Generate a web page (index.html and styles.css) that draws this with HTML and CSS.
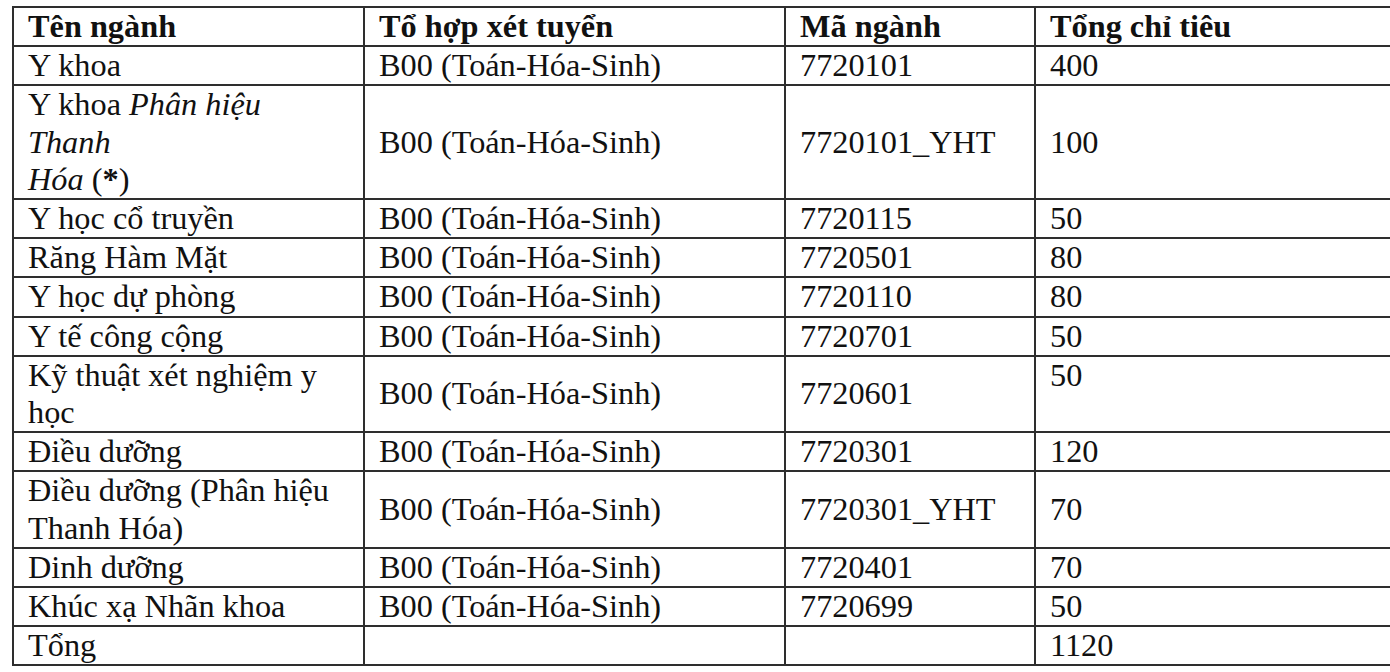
FILE: index.html
```html
<!DOCTYPE html>
<html lang="vi">
<head>
<meta charset="utf-8">
<link rel="stylesheet" href="styles.css">
</head>
<body>
<div class="page">
<table class="quota">
  <colgroup>
    <col class="c1"><col class="c2"><col class="c3"><col class="c4">
  </colgroup>
  <thead>
    <tr><th>Tên ngành</th><th>Tổ hợp xét tuyển</th><th>Mã ngành</th><th>Tổng chỉ tiêu</th></tr>
  </thead>
  <tbody>
    <tr><td>Y khoa</td><td>B00 (Toán-Hóa-Sinh)</td><td>7720101</td><td>400</td></tr>
    <tr><td>Y khoa <i>Phân hiệu</i><br><i>Thanh</i><br><i>Hóa</i> (<b>*</b>)</td><td>B00 (Toán-Hóa-Sinh)</td><td>7720101_YHT</td><td>100</td></tr>
    <tr><td>Y học cổ truyền</td><td>B00 (Toán-Hóa-Sinh)</td><td>7720115</td><td>50</td></tr>
    <tr><td>Răng Hàm Mặt</td><td>B00 (Toán-Hóa-Sinh)</td><td>7720501</td><td>80</td></tr>
    <tr><td>Y học dự phòng</td><td>B00 (Toán-Hóa-Sinh)</td><td>7720110</td><td>80</td></tr>
    <tr><td>Y tế công cộng</td><td>B00 (Toán-Hóa-Sinh)</td><td>7720701</td><td>50</td></tr>
    <tr><td>Kỹ thuật xét nghiệm y<br>học</td><td>B00 (Toán-Hóa-Sinh)</td><td>7720601</td><td class="top">50</td></tr>
    <tr><td>Điều dưỡng</td><td>B00 (Toán-Hóa-Sinh)</td><td>7720301</td><td>120</td></tr>
    <tr><td>Điều dưỡng (Phân hiệu<br>Thanh Hóa)</td><td>B00 (Toán-Hóa-Sinh)</td><td>7720301_YHT</td><td>70</td></tr>
    <tr><td>Dinh dưỡng</td><td>B00 (Toán-Hóa-Sinh)</td><td>7720401</td><td>70</td></tr>
    <tr><td>Khúc xạ Nhãn khoa</td><td>B00 (Toán-Hóa-Sinh)</td><td>7720699</td><td>50</td></tr>
    <tr><td>Tổng</td><td></td><td></td><td>1120</td></tr>
  </tbody>
</table>
</div>
</body>
</html>
```
FILE: styles.css
```css
html, body {
  margin: 0;
  padding: 0;
  background: #fff;
}
.page {
  width: 1390px;
  height: 672px;
  box-sizing: border-box;
  padding: 6px 0 0 12px;
  overflow: hidden;
}
.quota {
  border-collapse: collapse;
  table-layout: fixed;
  width: 1382px;
  font-family: "Liberation Serif", "Times New Roman", serif;
  font-size: 32.3px;
  line-height: 37.2px;
  color: #111;
}
.quota col.c1 { width: 351px; }
.quota col.c2 { width: 421px; }
.quota col.c3 { width: 250px; }
.quota col.c4 { width: 360px; }
.quota th, .quota td {
  border: 2px solid #2e2e2e;
  padding: 0 14px;
  text-align: left;
  vertical-align: middle;
  white-space: nowrap;
}
.quota th { font-weight: bold; }
.quota td:first-child { vertical-align: top; }
.quota td.top { vertical-align: top; }
.quota b { font-weight: bold; }
```
